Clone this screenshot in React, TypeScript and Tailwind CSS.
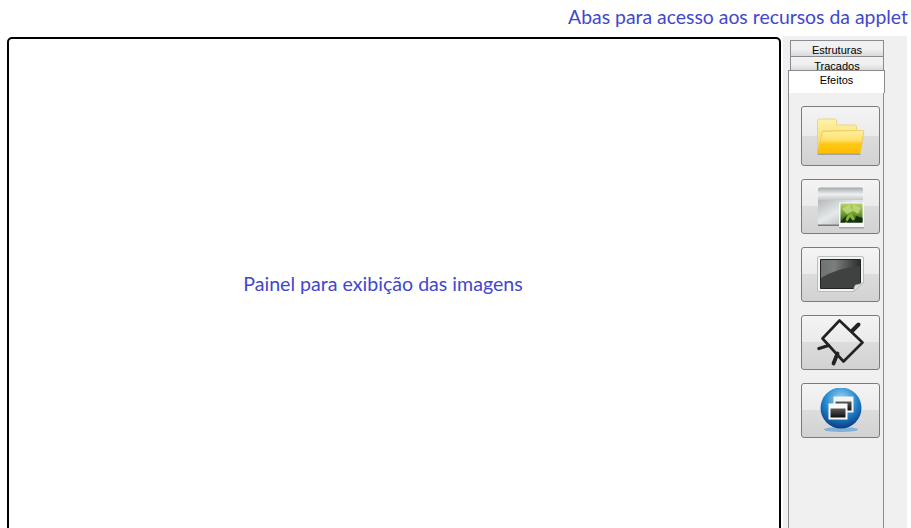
import React from 'react'

function FolderIcon() {
  return (
    <svg width="50" height="40" viewBox="0 0 50 40">
      <defs>
        <linearGradient id="fb" x1="0" y1="0" x2="0" y2="1">
          <stop offset="0" stopColor="#fff2a8" />
          <stop offset="1" stopColor="#f8d254" />
        </linearGradient>
        <linearGradient id="ff" x1="0" y1="0" x2="0" y2="1">
          <stop offset="0" stopColor="#fff1a2" />
          <stop offset="0.42" stopColor="#ffe06a" />
          <stop offset="0.58" stopColor="#ffc814" />
          <stop offset="1" stopColor="#ffbc04" />
        </linearGradient>
      </defs>
      <path d="M1.5 5 Q1.5 3 3.5 3 L19 3 Q20.5 3 20.5 5 L20.5 9 L39 9 Q40.5 9 40.5 11 L40.5 15 L7 15 L1.5 37Z" fill="url(#fb)" stroke="#e6c868" strokeWidth="0.7" />
      <path d="M6.5 15.5 L47 14.5 Q48 14.5 47.8 16 L44.5 36 Q44 37.5 42.5 37.5 L2.5 37.5 Q1.3 37.5 1.6 36Z" fill="url(#ff)" stroke="#ecc24a" strokeWidth="0.7" />
      <rect x="1.5" y="37.5" width="43" height="1.5" fill="#8d8d84" opacity="0.7" />
    </svg>
  )
}

function ImageIcon() {
  return (
    <svg width="48" height="44" viewBox="0 0 48 44">
      <defs>
        <linearGradient id="wh" x1="0" y1="0" x2="0" y2="1">
          <stop offset="0" stopColor="#a4a8ab" />
          <stop offset="0.55" stopColor="#eef0f0" />
          <stop offset="1" stopColor="#c4c8ca" />
        </linearGradient>
        <linearGradient id="wb" x1="0" y1="0" x2="1" y2="1">
          <stop offset="0" stopColor="#b4b9bc" />
          <stop offset="0.45" stopColor="#e6e9ea" />
          <stop offset="1" stopColor="#9ea3a6" />
        </linearGradient>
        <linearGradient id="leaf" x1="0" y1="0" x2="0" y2="1">
          <stop offset="0" stopColor="#b6d36a" />
          <stop offset="0.55" stopColor="#6f9b2f" />
          <stop offset="1" stopColor="#1f3f12" />
        </linearGradient>
      </defs>
      <rect x="1" y="15" width="45" height="25" fill="url(#wb)" />
      <path d="M1 4.5 Q1 2.5 3 2.5 L44 2.5 Q46 2.5 46 4.5 L46 15 L1 15Z" fill="url(#wh)" />
      <rect x="1" y="39.5" width="45" height="1.5" fill="#77797b" />
      <rect x="22" y="17.5" width="25" height="25" fill="#f8f8f8" />
      <rect x="22" y="42" width="25" height="1.5" fill="#a5a5a5" />
      <rect x="23.5" y="18.5" width="22" height="19" fill="url(#leaf)" />
      <path d="M25 24 L32 19.5 L36 26 L30 29Z M36 19.5 L44 23 L41 29 L35 25Z" fill="#c3dc7c" opacity="0.8" />
      <path d="M27 34 L34 28 L38 34 L32 37Z" fill="#86b53c" />
      <path d="M23.5 37 L30 30 L28 37.5 L23.5 37.5Z M33 32 L37 37.5 L30 37.5Z M39 31 L45.5 33 L45.5 37.5 L37 37.5Z" fill="#14300c" />
    </svg>
  )
}

function ScreenIcon() {
  return (
    <svg width="48" height="44" viewBox="0 0 48 44">
      <defs>
        <linearGradient id="gl" x1="0" y1="0" x2="1" y2="0">
          <stop offset="0" stopColor="#6e7271" />
          <stop offset="0.35" stopColor="#7a7e7d" />
          <stop offset="1" stopColor="#2c2e2d" />
        </linearGradient>
      </defs>
      <path d="M0.5 5 Q0.5 3.5 2 3.5 L45 3.5 Q46.5 3.5 46.5 5 L46.5 29.5 L36.5 38.5 L2 38.5 Q0.5 38.5 0.5 37Z" fill="#f2f3f2" stroke="#b0b1af" strokeWidth="0.8" />
      <path d="M3.5 6.5 L43.5 6.5 L43.5 30 L37 35.5 L3.5 35.5Z" fill="#3f4241" stroke="#232423" />
      <path d="M4 7 L43 7 L43 13 Q20 15 4 25Z" fill="url(#gl)" />
      <path d="M46.5 29.5 L36.5 38.5 Q37 33 38.5 32 Q42 31.5 46.5 29.5Z" fill="#dcdcda" stroke="#b0b1af" strokeWidth="0.6" />
    </svg>
  )
}

function PlugIcon() {
  return (
    <svg width="48" height="48" viewBox="0 0 48 48" fill="none" stroke="#222" strokeLinecap="round" strokeLinejoin="round">
      <path d="M22.5 1.5 L45.5 23.5 L26.5 42.5 L5.5 19.5Z" strokeWidth="2.6" />
      <path d="M35.5 11.5 L41.5 5.5" strokeWidth="4" />
      <path d="M11.5 26.5 L2 29.5" strokeWidth="3.4" />
      <path d="M20.5 34.5 L16.5 44.5" strokeWidth="3.8" />
    </svg>
  )
}

function WindowsIcon() {
  return (
    <svg width="44" height="46" viewBox="0 0 44 46">
      <defs>
        <radialGradient id="orb" cx="0.5" cy="0.3" r="0.72">
          <stop offset="0" stopColor="#a6d9f5" />
          <stop offset="0.55" stopColor="#2186cd" />
          <stop offset="1" stopColor="#08387f" />
        </radialGradient>
        <linearGradient id="blk" x1="0" y1="0" x2="0" y2="1">
          <stop offset="0" stopColor="#5a5a5a" />
          <stop offset="1" stopColor="#0e0e0e" />
        </linearGradient>
      </defs>
      <ellipse cx="22" cy="41.5" rx="17" ry="2.5" fill="#4b98d8" opacity="0.6" />
      <circle cx="22" cy="20" r="20.5" fill="url(#orb)" />
      <rect x="14.5" y="8.5" width="20" height="16" fill="#f4f4f4" />
      <rect x="16.5" y="13.5" width="16" height="9" fill="url(#blk)" />
      <rect x="9.5" y="15.5" width="19" height="16" fill="#fafafa" />
      <rect x="11.5" y="20.5" width="15" height="9" fill="url(#blk)" />
    </svg>
  )
}

const tools = [
  { id: 'abrir', h: 'h-[60px]', icon: <FolderIcon /> },
  { id: 'imagem', h: 'h-[55px]', icon: <ImageIcon /> },
  { id: 'tela', h: 'h-[55px]', icon: <ScreenIcon /> },
  { id: 'plug', h: 'h-[55px]', icon: <PlugIcon /> },
  { id: 'janelas', h: 'h-[55px]', icon: <WindowsIcon /> },
]

function ToolButton({ h, icon }: { h: string; icon: React.ReactNode }) {
  return (
    <div className={`${h} w-[79px] flex items-center justify-center rounded-[3px] border border-[#7b7b7b] bg-[linear-gradient(to_bottom,#f4f4f4_0%,#ebebeb_49%,#dcdcdc_50%,#d2d2d2_100%)]`}>
      {icon}
    </div>
  )
}

export default function App() {
  return (
    <div className="w-[911px] h-[528px] overflow-hidden bg-white font-['Lato',sans-serif] flex flex-col">
      <div className="h-[36px] shrink-0 flex justify-end pr-[3px] pt-[5px] text-[19.4px] leading-[24px] text-[#3f48cc]">
        Abas para acesso aos recursos da applet
      </div>
      <div className="flex flex-1 min-h-0 pl-[7px]">
        <div className="mt-[1px] w-[774px] h-[520px] shrink-0 border-2 border-black rounded-[5px] flex items-center justify-center pb-[26px] pr-[22px] text-[19.6px] text-[#3f48cc]">
          Painel para exibição das imagens
        </div>
        <div className="ml-[2px] w-[124px] h-full bg-[#f0f0f0] pl-[5px] font-['Liberation_Sans',sans-serif] text-[11px] text-black">
          <div className="w-[97px] pt-[4px]">
            <div className="ml-[2px] w-[94px] h-[16px] border border-[#8a8a92] border-b-0 bg-[linear-gradient(to_bottom,#f2f2f2_0%,#f0f0f0_55%,#d9d9d9_100%)] text-center leading-[18px]">Estruturas</div>
            <div className="ml-[2px] w-[94px] h-[14px] border border-[#8a8a92] border-b-0 bg-[linear-gradient(to_bottom,#f2f2f2_0%,#f0f0f0_55%,#d9d9d9_100%)] text-center leading-[19px] overflow-hidden">Tracados</div>
            <div className="relative h-[23px] border border-[#8a8a92] border-b-0 bg-white text-center leading-[18px]">Efeitos</div>
            <div className="w-[96px] h-[440px] border-x border-x-[#8a8a92] flex flex-col gap-[13px] pt-[13px] pl-[12px]">
              {tools.map(t => (
                <ToolButton key={t.id} h={t.h} icon={t.icon} />
              ))}
            </div>
          </div>
        </div>
      </div>
    </div>
  )
}
